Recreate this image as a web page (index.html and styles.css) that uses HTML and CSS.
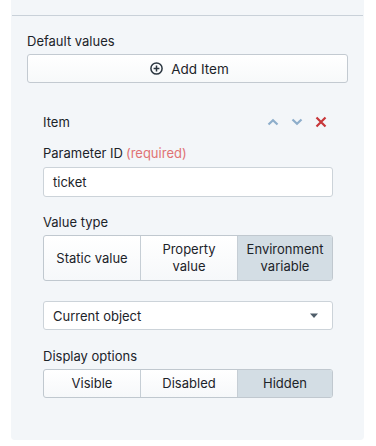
FILE: index.html
```html
<!DOCTYPE html>
<html>
<head>
<meta charset="utf-8">
<link rel="stylesheet" href="styles.css">
</head>
<body>
<div class="panel">
  <div class="divider"></div>
  <div class="section">
    <div class="label">Default values</div>
    <button class="add-btn">
      <svg width="13" height="13" viewBox="0 0 13 13"><circle cx="6.5" cy="6.5" r="5.6" fill="none" stroke="#2b3640" stroke-width="1.5"/><path d="M6.5 3.6v5.8M3.6 6.5h5.8" stroke="#2b3640" stroke-width="1.5"/></svg>
      <span>Add Item</span>
    </button>
  </div>
  <div class="item">
    <div class="item-head">
      <span>Item</span>
      <div class="actions">
        <svg class="chev" width="12" height="8" viewBox="0 0 12 8"><path d="M1.5 6.5L6 2.2l4.5 4.3" fill="none" stroke="#8eaecb" stroke-width="2.2"/></svg>
        <svg class="chev" width="12" height="8" viewBox="0 0 12 8"><path d="M1.5 1.5L6 5.8l4.5-4.3" fill="none" stroke="#8eaecb" stroke-width="2.2"/></svg>
        <svg class="close" width="12" height="12" viewBox="0 0 12 12"><path d="M1.5 1.5l9 9M10.5 1.5l-9 9" stroke="#c8373a" stroke-width="2.2"/></svg>
      </div>
    </div>
    <div class="label l-param">Parameter ID<span class="req">(required)</span></div>
    <div class="input">ticket</div>
    <div class="label l-gap">Value type</div>
    <div class="seg seg-tall">
      <div class="opt">Static value</div>
      <div class="opt">Property<br>value</div>
      <div class="opt active">Environment<br>variable</div>
    </div>
    <div class="select">
      <span>Current object</span>
      <svg width="10" height="6" viewBox="0 0 10 6"><path d="M1 0.5h8L5 5z" fill="#4f5d69"/></svg>
    </div>
    <div class="label l-gap2">Display options</div>
    <div class="seg">
      <div class="opt">Visible</div>
      <div class="opt">Disabled</div>
      <div class="opt active">Hidden</div>
    </div>
  </div>
</div>
</body>
</html>
```

FILE: styles.css
```css
* { box-sizing: border-box; }
body {
  margin: 0;
  background: #ffffff;
  font-family: Inter, "Noto Sans", sans-serif;
  font-size: 13px;
  color: #1c2329;
}
.panel {
  margin: 0 12px 0 11px;
  width: 353px;
  height: 440px;
  background: #f3f6f9;
  border-radius: 0 0 4px 4px;
  padding-top: 15px;
}
.divider {
  height: 1px;
  background: #c9d1d9;
  margin: 0 1px;
}
.section {
  padding: 0 16px;
}
.label {
  height: 18px;
  line-height: 18px;
  margin-top: 16px;
}
.add-btn {
  margin-top: 4px;
  width: 100%;
  height: 29px;
  border: 1px solid #c3cad1;
  border-radius: 3px;
  background: linear-gradient(#ffffff, #f7f9fa);
  display: flex;
  align-items: center;
  justify-content: center;
  gap: 8px;
  font: inherit;
  font-size: 13.5px;
  color: #1c2329;
  padding: 0 0 0 4px;
}
.item {
  padding: 0 31px 0 32px;
}
.item-head {
  margin-top: 30px;
  height: 18px;
  line-height: 18px;
  display: flex;
  justify-content: space-between;
  align-items: center;
}
.actions {
  display: flex;
  align-items: center;
  gap: 12px;
  margin-right: 6px;
}
.l-param { margin-top: 13px; }
.req { color: #e07274; margin-left: 3px; }
.input {
  margin-top: 5px;
  height: 30px;
  background: #ffffff;
  border: 1px solid #ccd3d9;
  border-radius: 3px;
  padding: 0 9px;
  line-height: 28px;
}
.l-gap { margin-top: 16px; }
.l-gap2 { margin-top: 17px; }
.seg {
  margin-top: 4px;
  height: 29px;
  display: grid;
  grid-template-columns: 96px 97px 1fr;
  border: 1px solid #c0c8cf;
  border-radius: 3px;
  overflow: hidden;
  background: linear-gradient(#ffffff, #f6f8fa);
}
.seg-tall { height: 46px; }
.opt {
  display: flex;
  align-items: center;
  justify-content: center;
  text-align: center;
  line-height: 17px;
  border-left: 1px solid #c6ced5;
}
.opt:first-child { border-left: none; }
.opt.active { background: #d3dde4; }
.select {
  margin-top: 20px;
  height: 29px;
  background: #ffffff;
  border: 1px solid #ccd3d9;
  border-radius: 3px;
  padding: 0 13px 0 9px;
  display: flex;
  align-items: center;
  justify-content: space-between;
}
```
